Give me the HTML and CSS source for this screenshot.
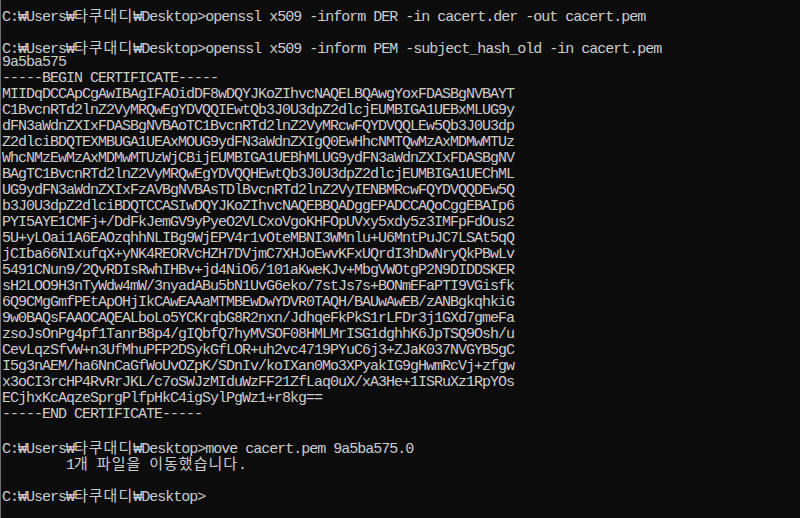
FILE: index.html
```html
<!DOCTYPE html>
<html lang="ko">
<head>
  <meta charset="UTF-8">
  <title>명령 프롬프트</title>
  <link rel="stylesheet" href="styles.css">
</head>
<body>

<div class="console">
  <div class="line">C:₩Users₩<span class="ko">타쿠대디</span>₩Desktop&gt;openssl x509 -inform DER -in cacert.der -out cacert.pem</div>
  <div class="line"></div>
  <div class="line">C:₩Users₩<span class="ko">타쿠대디</span>₩Desktop&gt;openssl x509 -inform PEM -subject_hash_old -in cacert.pem</div>
  <div class="line">9a5ba575</div>
  <div class="line">-----BEGIN CERTIFICATE-----</div>
  <div class="line">MIIDqDCCApCgAwIBAgIFAOidDF8wDQYJKoZIhvcNAQELBQAwgYoxFDASBgNVBAYT</div>
  <div class="line">C1BvcnRTd2lnZ2VyMRQwEgYDVQQIEwtQb3J0U3dpZ2dlcjEUMBIGA1UEBxMLUG9y</div>
  <div class="line">dFN3aWdnZXIxFDASBgNVBAoTC1BvcnRTd2lnZ2VyMRcwFQYDVQQLEw5Qb3J0U3dp</div>
  <div class="line">Z2dlciBDQTEXMBUGA1UEAxMOUG9ydFN3aWdnZXIgQ0EwHhcNMTQwMzAxMDMwMTUz</div>
  <div class="line">WhcNMzEwMzAxMDMwMTUzWjCBijEUMBIGA1UEBhMLUG9ydFN3aWdnZXIxFDASBgNV</div>
  <div class="line">BAgTC1BvcnRTd2lnZ2VyMRQwEgYDVQQHEwtQb3J0U3dpZ2dlcjEUMBIGA1UEChML</div>
  <div class="line">UG9ydFN3aWdnZXIxFzAVBgNVBAsTDlBvcnRTd2lnZ2VyIENBMRcwFQYDVQQDEw5Q</div>
  <div class="line">b3J0U3dpZ2dlciBDQTCCASIwDQYJKoZIhvcNAQEBBQADggEPADCCAQoCggEBAIp6</div>
  <div class="line">PYI5AYE1CMFj+/DdFkJemGV9yPyeO2VLCxoVgoKHFOpUVxy5xdy5z3IMFpFdOus2</div>
  <div class="line">5U+yLOai1A6EAOzqhhNLIBg9WjEPV4r1vOteMBNI3WMnlu+U6MntPuJC7LSAt5qQ</div>
  <div class="line">jCIba66NIxufqX+yNK4REORVcHZH7DVjmC7XHJoEwvKFxUQrdI3hDwNryQkPBwLv</div>
  <div class="line">5491CNun9/2QvRDIsRwhIHBv+jd4NiO6/101aKweKJv+MbgVWOtgP2N9DIDDSKER</div>
  <div class="line">sH2LOO9H3nTyWdw4mW/3nyadABu5bN1UvG6eko/7stJs7s+BONmEFaPTI9VGisfk</div>
  <div class="line">6Q9CMgGmfPEtApOHjIkCAwEAAaMTMBEwDwYDVR0TAQH/BAUwAwEB/zANBgkqhkiG</div>
  <div class="line">9w0BAQsFAAOCAQEALboLo5YCKrqbG8R2nxn/JdhqeFkPkS1rLFDr3j1GXd7gmeFa</div>
  <div class="line">zsoJsOnPg4pf1TanrB8p4/gIQbfQ7hyMVSOF08HMLMrISG1dghhK6JpTSQ9Osh/u</div>
  <div class="line">CevLqzSfvW+n3UfMhuPFP2DSykGfLOR+uh2vc4719PYuC6j3+ZJaK037NVGYB5gC</div>
  <div class="line">I5g3nAEM/ha6NnCaGfWoUvOZpK/SDnIv/koIXan0Mo3XPyakIG9gHwmRcVj+zfgw</div>
  <div class="line">x3oCI3rcHP4RvRrJKL/c7oSWJzMIduWzFF21ZfLaq0uX/xA3He+1ISRuXz1RpYOs</div>
  <div class="line">ECjhxKcAqzeSprgPlfpHkC4igSylPgWz1+r8kg==</div>
  <div class="line">-----END CERTIFICATE-----</div>
  <div class="line"></div>
  <div class="line">C:₩Users₩<span class="ko">타쿠대디</span>₩Desktop&gt;move cacert.pem 9a5ba575.0</div>
  <div class="line">        1<span class="ko">개</span> <span class="ko">파일을</span> <span class="ko">이동했습니다</span>.</div>
  <div class="line"></div>
  <div class="line">C:₩Users₩<span class="ko">타쿠대디</span>₩Desktop&gt;</div>
</div>

</body>
</html>
```

FILE: styles.css
```css
html, body {
  margin: 0;
  padding: 0;
  height: 100%;
  background-color: #0c0c0c;
}
.console {
  height: 100%;
  box-sizing: border-box;
  border-left: 1px solid #6e6e6e;
  padding: 7px 0 0 1px;
  color: #cccccc;
  font-family: "Liberation Mono", "Noto Sans CJK KR", monospace;
  font-size: 15px;
  letter-spacing: -1px;
}
.line {
  height: 16px;
  line-height: 16px;
  white-space: pre;
}
/* korean glyphs take two console cells */
.ko {
  font-family: "Noto Sans CJK KR", sans-serif;
  letter-spacing: 1px;
}
```
